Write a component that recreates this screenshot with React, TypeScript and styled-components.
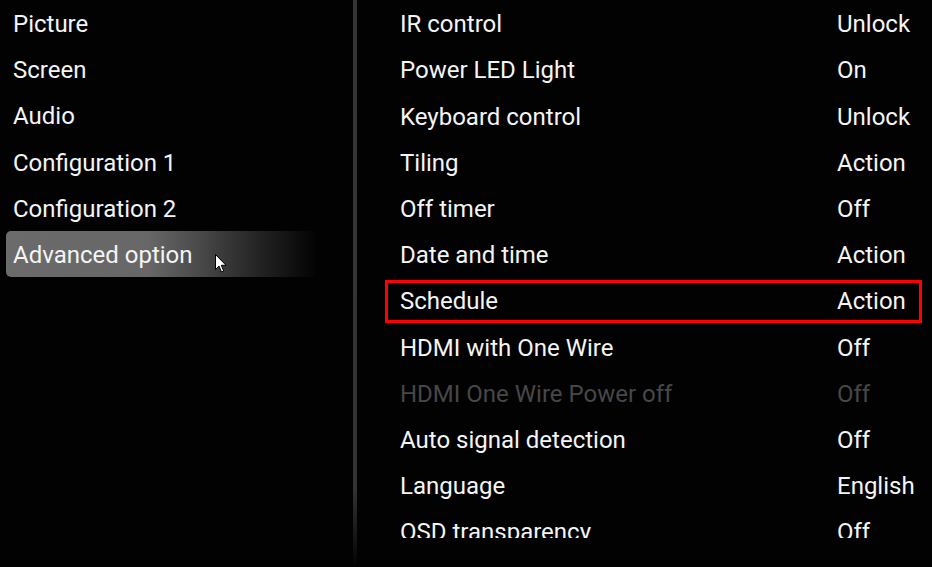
import React from "react";
import styled, { createGlobalStyle } from "styled-components";

const Global = createGlobalStyle`
  html, body { margin: 0; padding: 0; background: #020202; }
  body { font-family: Roboto, "Noto Sans", Arial, sans-serif; }
`;

const Screen = styled.div`
  width: 932px;
  height: 567px;
  background: #020202;
  display: flex;
  overflow: hidden;
  color: #f4f4f4;
  font-size: 24px;
`;

const Sidebar = styled.nav`
  width: 347px;
  padding-left: 6px;
  display: flex;
  flex-direction: column;
`;

const MenuItem = styled.div<{ $active?: boolean }>`
  position: relative;
  height: 46.2px;
  width: 310px;
  box-sizing: border-box;
  padding: 2px 0 0 7px;
  display: flex;
  align-items: center;
  border-radius: 5px;
  background: ${(p) =>
    p.$active
      ? "linear-gradient(to right, #6b6b6b 0%, #676767 46%, #4a4a4a 62%, #262626 80%, #030303 100%)"
      : "transparent"};
`;

const Cursor = styled.svg`
  position: absolute;
  left: 209px;
  top: 23px;
`;

const Divider = styled.div`
  width: 4px;
  height: 100%;
  background: linear-gradient(to bottom, #353535 0%, #333 86%, #151515 95%, transparent 100%);
`;

const Content = styled.section`
  width: 537px;
  margin-left: 28px;
  height: 538px;
  overflow: hidden;
  display: flex;
  flex-direction: column;
`;

const Row = styled.div`
  height: 46.2px;
  flex-shrink: 0;
  display: flex;
  align-items: flex-end;
`;

const RowInner = styled.div<{ $selected?: boolean; $disabled?: boolean }>`
  box-sizing: border-box;
  width: 100%;
  height: 43px;
  border: 3px solid ${(p) => (p.$selected ? "#ff0000" : "transparent")};
  padding: 0 0 1px 12px;
  display: flex;
  align-items: center;
  color: ${(p) => (p.$disabled ? "#474747" : "#f4f4f4")};
`;

const Label = styled.span`
  width: 437px;
  white-space: nowrap;
`;

const Value = styled.span`
  white-space: nowrap;
`;

const menu = ["Picture", "Screen", "Audio", "Configuration 1", "Configuration 2", "Advanced option"];

const settings: { label: string; value: string; selected?: boolean; disabled?: boolean }[] = [
  { label: "IR control", value: "Unlock" },
  { label: "Power LED Light", value: "On" },
  { label: "Keyboard control", value: "Unlock" },
  { label: "Tiling", value: "Action" },
  { label: "Off timer", value: "Off" },
  { label: "Date and time", value: "Action" },
  { label: "Schedule", value: "Action", selected: true },
  { label: "HDMI with One Wire", value: "Off" },
  { label: "HDMI One Wire Power off", value: "Off", disabled: true },
  { label: "Auto signal detection", value: "Off" },
  { label: "Language", value: "English" },
  { label: "OSD transparency", value: "Off" },
];

export default function App() {
  return (
    <>
      <Global />
      <Screen>
        <Sidebar>
          {menu.map((m, i) => (
            <MenuItem key={m} $active={i === menu.length - 1}>
              {m}
              {i === menu.length - 1 && (
                <Cursor width="12" height="19" viewBox="0 0 12 19">
                  <path d="M0.5 0.5 L0.5 15.5 L4 12 L6.5 18 L8.7 17 L6.3 11.3 L11 11.3 Z" fill="#fff" stroke="#000" strokeWidth="1" />
                </Cursor>
              )}
            </MenuItem>
          ))}
        </Sidebar>
        <Divider />
        <Content>
          {settings.map((s) => (
            <Row key={s.label}>
              <RowInner $selected={s.selected} $disabled={s.disabled}>
                <Label>{s.label}</Label>
                <Value>{s.value}</Value>
              </RowInner>
            </Row>
          ))}
        </Content>
      </Screen>
    </>
  );
}
